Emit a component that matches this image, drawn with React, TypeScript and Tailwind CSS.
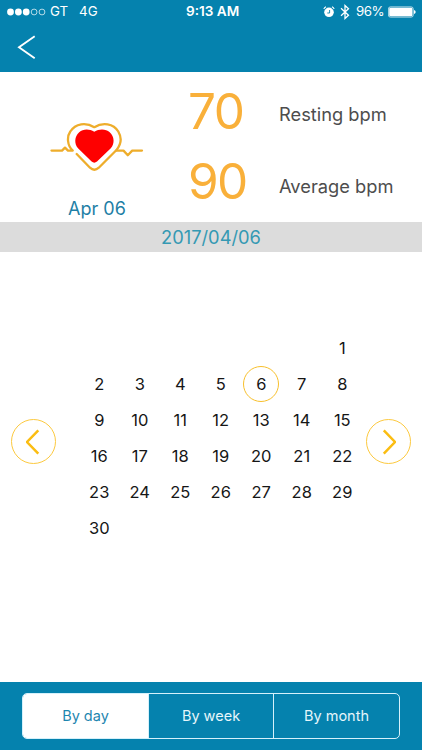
import { useState } from "react";

const blanks = [0, 1, 2, 3, 4, 5];
const days = Array.from({ length: 30 }, (_, i) => i + 1);

const StatusBar = () => (
  <div className="grid h-[23px] grid-cols-[186px_1fr_auto] items-center pl-[7px] pr-[6px] text-[13.3px] leading-[23px] text-white">
    <div className="flex items-center">
      <svg width="39" height="8" viewBox="0 0 39 8" fill="#fff">
        <circle cx="3.5" cy="4" r="3.4" />
        <circle cx="11.4" cy="4" r="3.4" />
        <circle cx="19.2" cy="4" r="3.4" />
        <circle cx="27.1" cy="4" r="2.9" fill="none" stroke="#fff" strokeWidth="0.7" />
        <circle cx="35" cy="4" r="2.9" fill="none" stroke="#fff" strokeWidth="0.7" />
      </svg>
      <span className="ml-[4px]">GT</span>
      <span className="ml-[11px]">4G</span>
    </div>
    <span className="-ml-[7px] text-[13.6px] font-semibold">9:13 AM</span>
    <div className="flex items-center">
      {/* alarm */}
      <svg width="12" height="12" viewBox="0 0 12 12" fill="none">
        <circle cx="6" cy="6.3" r="4.8" fill="#fff" />
        <path d="M0.8 3 A6 6 0 0 1 3 0.8 M11.2 3 A6 6 0 0 0 9 0.8" stroke="#fff" strokeWidth="1.1" />
        <path d="M6.6 4 V7 H4.3" stroke="#0582ae" strokeWidth="0.9" />
      </svg>
      {/* bluetooth */}
      <svg className="ml-[5px]" width="10" height="16" viewBox="0 0 10 16" fill="none" stroke="#fff" strokeWidth="1.3">
        <path d="M1 4.3 L8.5 11.2 L5 14.5 V1.5 L8.5 4.8 L1 11.7" />
      </svg>
      <span className="ml-[6px] tracking-[-0.5px]">96%</span>
      <svg className="ml-[4px]" width="28" height="12" viewBox="0 0 28 12">
        <rect x="0.4" y="0.9" width="24.8" height="10.2" rx="2" fill="none" stroke="#fff" strokeWidth="0.7" />
        <rect x="1.2" y="1.7" width="23.2" height="8.6" rx="1.2" fill="#fff" />
        <path d="M26 4 Q27.7 4.4 27.7 6 Q27.7 7.6 26 8 Z" fill="#fff" />
      </svg>
    </div>
  </div>
);

const HeartIcon = () => (
  <svg width="94" height="52" viewBox="0 0 94 52" fill="none">
    <path
      d="M44.3 9.7 C39 6.7 33 6.9 29.2 10.3 C24.3 14.8 24.1 21.8 28 26.2 L41.6 39.6 Q44.3 41.8 47 39.6 L60.8 26.2 C64.8 21.8 64.6 14.8 59.7 10.3 C55.8 6.9 49.5 6.7 44.3 9.7 Z"
      fill="#fe0000"
    />
    <path
      d="M1.5 28.6 H12 L15 25.6 L18 28.6 H22.8 C17 23.5 16.8 14.5 20.3 9.5 C25.5 1.2 36 0 44.3 5.2 C52.5 0 63.5 1.2 68.3 9.5 C71.8 15.5 71 22.5 66.5 28 L48.8 45.7 Q44.3 49.7 40 45.7 L26.7 32"
      stroke="#eead2b"
      strokeWidth="2.3"
      strokeLinecap="round"
      strokeLinejoin="round"
    />
    <path d="M66 28.6 H73.5 L77.8 33.2 L82.2 28.6 H92" stroke="#eead2b" strokeWidth="2.3" strokeLinecap="round" strokeLinejoin="round" />
  </svg>
);

const App = () => {
  const [selected, setSelected] = useState(6);
  const [range, setRange] = useState("By day");

  return (
    <div className="flex h-[750px] w-[422px] flex-col bg-white font-['Inter','Liberation_Sans',sans-serif]">
      <header className="h-[72px] bg-[#0582ae]">
        <StatusBar />
        <button className="ml-[17px] mt-[12px] block">
          <svg width="19" height="25" viewBox="0 0 19 25" fill="none" stroke="#fff" strokeWidth="1.9">
            <path d="M17.7 1.3 L2 12.3 L17.7 23.3" />
          </svg>
        </button>
      </header>

      <section className="flex h-[150px]">
        <div className="flex w-[194px] flex-col items-center pt-[50px] text-[#1e7fa6]">
          <HeartIcon />
          <p className="mt-[23px] text-[18px] leading-[24px]">Apr 06</p>
        </div>
        <div className="-ml-[6px] w-[91px] text-[49.5px] leading-[70px] tracking-[-1.6px] text-[#f9b03a]">
          <p className="pt-[4px]">70</p>
          <p>90</p>
        </div>
        <div className="text-[18.3px] leading-[24px] text-[#4d4d4d]">
          <p className="pt-[30px]">Resting bpm</p>
          <p className="pt-[48px]">Average bpm</p>
        </div>
      </section>

      <div className="h-[30px] bg-[#dcdcdc] text-center text-[18.3px] leading-[31px] text-[#3599b3]">2017/04/06</div>

      <main className="flex flex-1 items-start pl-[11px]">
        <button className="mt-[167px] flex size-[45px] items-center justify-center rounded-full border border-[#fcc93f]">
          <svg width="15" height="26" viewBox="0 0 15 26" fill="none" stroke="#fbbd12" strokeWidth="2.5">
            <path d="M12.3 1.3 L1 13 L12.3 24.7" />
          </svg>
        </button>
        <div className="ml-[23px] mt-[78px] grid w-[283.5px] grid-cols-7 text-[16.5px] text-[#161616]">
          {blanks.map((b) => (
            <span key={b} />
          ))}
          {days.map((d) => (
            <button key={d} onClick={() => setSelected(d)} className="flex h-[36px] items-center justify-center">
              <span
                className={
                  d === selected
                    ? "flex size-[36px] items-center justify-center rounded-full border border-[#f8c02c]"
                    : ""
                }
              >
                {d}
              </span>
            </button>
          ))}
        </div>
        <button className="ml-[3px] mt-[167px] flex size-[45px] items-center justify-center rounded-full border border-[#fcc93f]">
          <svg width="15" height="26" viewBox="0 0 15 26" fill="none" stroke="#fbbd12" strokeWidth="2.5">
            <path d="M2.8 1.3 L14 13 L2.8 24.7" />
          </svg>
        </button>
      </main>

      <footer className="h-[68px] bg-[#0582ae] pl-[22px] pt-[11px]">
        <div className="grid h-[46px] w-[378px] grid-cols-[126px_125px_1fr] overflow-hidden rounded-[5px] border border-[#d5f1fb] text-[14.5px]">
          {["By day", "By week", "By month"].map((label) => (
            <button
              key={label}
              onClick={() => setRange(label)}
              className={`border-r border-[#d5f1fb] last:border-r-0 ${
                range === label ? "bg-white text-[#1e86af]" : "text-[#e6f6fb]"
              }`}
            >
              {label}
            </button>
          ))}
        </div>
      </footer>
    </div>
  );
};

export default App;
